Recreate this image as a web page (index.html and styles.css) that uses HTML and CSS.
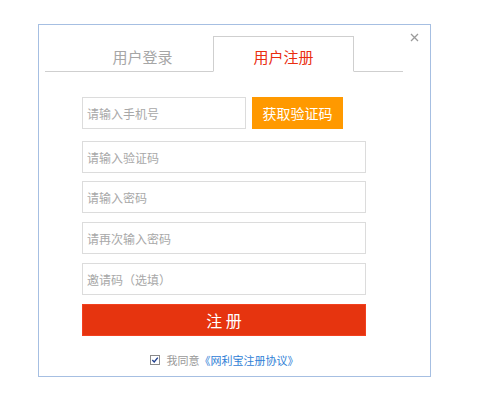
FILE: index.html
```html
<!DOCTYPE html>
<html lang="zh-CN">
<head>
<meta charset="utf-8">
<title>用户注册</title>
<link rel="stylesheet" href="styles.css">
</head>
<body>
<div class="dialog">
  <span class="close">
    <svg width="9" height="9" viewBox="0 0 9 9"><path d="M1 1L8 8M8 1L1 8" stroke="#9a9a9a" stroke-width="1.3" fill="none"/></svg>
  </span>
  <div class="tabs">
    <div class="tab">用户登录</div>
    <div class="tab active">用户注册</div>
  </div>
  <form class="form">
    <div class="row first">
      <input class="field short" type="text" placeholder="请输入手机号">
      <button class="code-btn" type="button">获取验证码</button>
    </div>
    <div class="row"><input class="field" type="text" placeholder="请输入验证码"></div>
    <div class="row"><input class="field" type="password" placeholder="请输入密码"></div>
    <div class="row"><input class="field" type="password" placeholder="请再次输入密码"></div>
    <div class="row"><input class="field" type="text" placeholder="邀请码（选填）"></div>
    <button class="submit" type="button">注 册</button>
    <div class="agree">
      <svg class="check" width="10" height="10" viewBox="0 0 10 10"><rect x="0.5" y="0.5" width="9" height="9" fill="#fff" stroke="#8a8a8a"/><path d="M2.3 5L4.2 7L7.8 2.6" stroke="#1f3f8f" stroke-width="1.4" fill="none"/></svg>
      <span class="agree-text">我同意</span>
      <a class="agree-link" href="#">《网利宝注册协议》</a>
    </div>
  </form>
</div>
</body>
</html>
```

FILE: styles.css
```css
* { box-sizing: border-box; }
html, body { margin: 0; padding: 0; background: #fff; }
body {
  font-family: "Noto Sans CJK SC", "Liberation Sans", sans-serif;
}
.dialog {
  position: relative;
  margin: 24px 0 0 38px;
  width: 393px;
  height: 353px;
  border: 1px solid #a6bfe2;
  background: #fff;
}
.close {
  position: absolute;
  top: 8px;
  right: 11px;
  width: 9px;
  height: 9px;
  line-height: 0;
}
.tabs {
  display: flex;
  margin: 11px 27px 0 6px;
  padding-left: 27px;
  border-bottom: 1px solid #cfcfcf;
  height: 36px;
}
.tab {
  width: 141px;
  height: 36px;
  padding-top: 6px;
  line-height: 29px;
  text-align: center;
  font-size: 15px;
  color: #a6a6a6;
}
.tab.active {
  color: #ea2d10;
  background: #fff;
  border: 1px solid #cfcfcf;
  border-bottom: 1px solid #fff;
  padding-top: 5px;
  height: 36px;
}
.form {
  margin: 25px 0 0 43px;
  width: 284px;
}
.row {
  display: flex;
  gap: 6px;
  margin-bottom: 8px;
}
.row.first { margin-bottom: 12px; }
.row + .row { margin-bottom: 9px; }
.row:nth-child(2) { margin-bottom: 8px; }
.field {
  width: 284px;
  height: 32px;
  border: 1px solid #dcdcdc;
  padding: 0 4px;
  font-family: inherit;
  font-size: 12px;
  color: #333;
  outline: none;
  background: #fff;
}
.field::placeholder { color: #a8a8a8; }
.field.short { width: 164px; }
.code-btn {
  width: 91px;
  height: 32px;
  border: none;
  background: #ff9900;
  color: #fff;
  font-family: inherit;
  font-size: 14px;
  padding: 0;
}
.submit {
  display: block;
  width: 284px;
  height: 32px;
  border: 1px solid #f2401f;
  background: #e6340f;
  color: #fff;
  font-family: inherit;
  font-size: 16px;
  padding: 0;
}
.agree {
  display: flex;
  align-items: center;
  justify-content: center;
  margin-top: 17px;
  font-size: 11px;
  line-height: 14px;
}
.check { margin-right: 7px; }
.agree-text { color: #9a9a9a; }
.agree-link { color: #2f80d6; text-decoration: none; }
```
